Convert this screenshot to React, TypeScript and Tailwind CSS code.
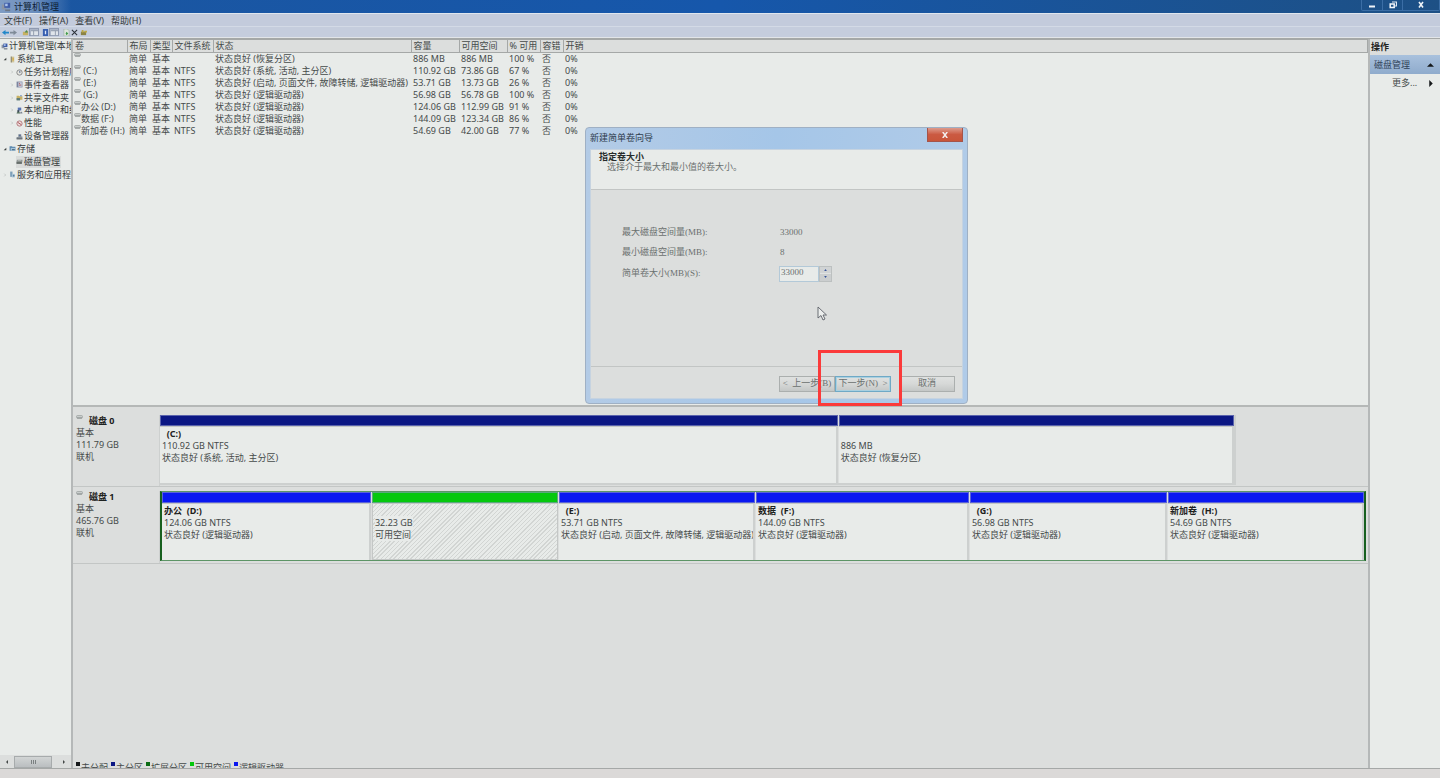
import type { ReactNode } from "react";

type IconName =
  | "computer"
  | "tools"
  | "clock"
  | "event"
  | "folder"
  | "users"
  | "perf"
  | "device"
  | "storage"
  | "disk"
  | "service";

const iconShapes: Record<IconName, ReactNode> = {
  computer: (
    <>
      <rect x="1" y="3" width="5" height="6" fill="#8b95a5" />
      <rect x="4" y="1" width="7" height="6" fill="#3f5da8" />
      <rect x="5" y="2" width="3" height="3" fill="#a9c2ec" />
      <rect x="5" y="9" width="6" height="2" fill="#6d7787" />
    </>
  ),
  tools: (
    <>
      <rect x="3" y="1" width="6" height="10" fill="#cfc59c" />
      <rect x="3" y="1" width="2" height="10" fill="#8e8a78" />
      <rect x="6" y="3" width="2" height="5" fill="#d8a93c" />
    </>
  ),
  clock: (
    <>
      <circle cx="6" cy="6" r="4.6" fill="#e6e6e0" stroke="#7d7f80" strokeWidth="1.5" />
      <path d="M6 3v3.2l2.4-1.4" fill="none" stroke="#58688c" strokeWidth="1.2" />
    </>
  ),
  event: (
    <>
      <rect x="1" y="1" width="10" height="10" fill="#7c85a0" />
      <rect x="4" y="2" width="6" height="8" fill="#c9cede" />
      <path d="M5 4h2M5 7h4" stroke="#a04b50" strokeWidth="1.5" />
    </>
  ),
  folder: (
    <>
      <path d="M1 3h4l1 1h5v6H1z" fill="#c9b264" />
      <rect x="1" y="7" width="6" height="4" fill="#5c7b7a" />
      <rect x="7" y="2" width="3" height="2" fill="#7c9ac8" />
    </>
  ),
  users: (
    <>
      <rect x="3" y="1" width="6" height="5" fill="#5873b3" />
      <circle cx="4" cy="7" r="2" fill="#3c4b58" />
      <path d="M1 11c0-3 6-3 6 0z" fill="#55705f" />
      <path d="M7 11c0-4 4-4 4 0z" fill="#7d8693" />
    </>
  ),
  perf: (
    <>
      <circle cx="6" cy="6" r="4.5" fill="#ecdcdc" stroke="#b3767a" strokeWidth="1.6" />
      <path d="M3 4l6 4" stroke="#a8474d" strokeWidth="1.5" />
    </>
  ),
  device: (
    <>
      <path d="M4 2h5v4h2v4H1V7h3z" fill="#87909a" />
      <rect x="5" y="3" width="3" height="2" fill="#526b96" />
      <rect x="1" y="9" width="10" height="2" fill="#5d656b" />
    </>
  ),
  storage: (
    <>
      <path d="M1 2h4l1 1h5v7H1z" fill="#5a88ad" />
      <rect x="3" y="5" width="8" height="5" fill="#a9c5da" />
      <rect x="5" y="7" width="5" height="2" fill="#4b6c82" />
    </>
  ),
  disk: (
    <>
      <path d="M2 3h9v2l-1 5H1V5z" fill="#8c9391" />
      <rect x="1" y="7" width="9" height="3" fill="#646b69" />
      <rect x="3" y="4" width="6" height="1" fill="#c3c8c6" />
    </>
  ),
  service: (
    <>
      <rect x="2" y="1" width="4" height="9" fill="#7c9fb9" />
      <rect x="5" y="5" width="5" height="6" fill="#a9c5d8" />
      <circle cx="8" cy="8" r="1.5" fill="#5b7f99" />
    </>
  ),
};

function Icon({ name, className = "size-[7px]" }: { name: IconName; className?: string }) {
  return (
    <svg viewBox="0 0 12 12" className={`${className} shrink-0`} aria-hidden="true">
      {iconShapes[name]}
    </svg>
  );
}

function DriveIcon() {
  return (
    <svg viewBox="0 0 7 4" className="w-[7px] h-1 shrink-0" aria-hidden="true">
      <rect x="0.5" y="0.5" width="6" height="2.6" rx="1" fill="#c9cdcc" stroke="#9a9f9e" strokeWidth="0.7" />
      <path d="M1 3h5" stroke="#7b8180" strokeWidth="0.8" />
    </svg>
  );
}

const tree: { label: string; icon: IconName; level: number; mark?: string; selected?: boolean }[] = [
  { label: "计算机管理(本地)", icon: "computer", level: 0 },
  { label: "系统工具", icon: "tools", level: 1, mark: "open" },
  { label: "任务计划程序", icon: "clock", level: 2, mark: "closed" },
  { label: "事件查看器", icon: "event", level: 2, mark: "closed" },
  { label: "共享文件夹", icon: "folder", level: 2, mark: "closed" },
  { label: "本地用户和组", icon: "users", level: 2, mark: "closed" },
  { label: "性能", icon: "perf", level: 2, mark: "closed" },
  { label: "设备管理器", icon: "device", level: 2 },
  { label: "存储", icon: "storage", level: 1, mark: "open" },
  { label: "磁盘管理", icon: "disk", level: 2, selected: true },
  { label: "服务和应用程序", icon: "service", level: 1, mark: "closed" },
];

const indents = ["pl-px", "pl-[3px]", "pl-[10px]"];

const columns = [
  { label: "卷", width: "w-[54px]" },
  { label: "布局", width: "w-[23px]" },
  { label: "类型", width: "w-[22px]" },
  { label: "文件系统", width: "w-[41px]" },
  { label: "状态", width: "w-[198px]" },
  { label: "容量", width: "w-[48px]" },
  { label: "可用空间", width: "w-[48px]" },
  { label: "% 可用", width: "w-[33px]" },
  { label: "容错", width: "w-[23px]" },
  { label: "开销", width: "w-auto" },
];

const volumes = [
  ["", "简单", "基本", "", "状态良好 (恢复分区)", "886 MB", "886 MB", "100 %", "否", "0%"],
  ["\u00a0(C:)", "简单", "基本", "NTFS", "状态良好 (系统, 活动, 主分区)", "110.92 GB", "73.86 GB", "67 %", "否", "0%"],
  ["\u00a0(E:)", "简单", "基本", "NTFS", "状态良好 (启动, 页面文件, 故障转储, 逻辑驱动器)", "53.71 GB", "13.73 GB", "26 %", "否", "0%"],
  ["\u00a0(G:)", "简单", "基本", "NTFS", "状态良好 (逻辑驱动器)", "56.98 GB", "56.78 GB", "100 %", "否", "0%"],
  ["办公 (D:)", "简单", "基本", "NTFS", "状态良好 (逻辑驱动器)", "124.06 GB", "112.99 GB", "91 %", "否", "0%"],
  ["数据 (F:)", "简单", "基本", "NTFS", "状态良好 (逻辑驱动器)", "144.09 GB", "123.34 GB", "86 %", "否", "0%"],
  ["新加卷 (H:)", "简单", "基本", "NTFS", "状态良好 (逻辑驱动器)", "54.69 GB", "42.00 GB", "77 %", "否", "0%"],
];

type Partition = { name: string; size: string; status: string; grow: string; free?: boolean };

const disk0: Partition[] = [
  { name: "\u00a0\u00a0(C:)", size: "110.92 GB NTFS", status: "状态良好 (系统, 活动, 主分区)", grow: "flex-[679]" },
  { name: "", size: "886 MB", status: "状态良好 (恢复分区)", grow: "flex-[396]" },
];

const disk1: Partition[] = [
  { name: "办公\u00a0\u00a0(D:)", size: "124.06 GB NTFS", status: "状态良好 (逻辑驱动器)", grow: "flex-[210]" },
  { name: "", size: "32.23 GB", status: "可用空间", grow: "flex-[187]", free: true },
  { name: "\u00a0\u00a0(E:)", size: "53.71 GB NTFS", status: "状态良好 (启动, 页面文件, 故障转储, 逻辑驱动器)", grow: "flex-[197]" },
  { name: "数据\u00a0\u00a0(F:)", size: "144.09 GB NTFS", status: "状态良好 (逻辑驱动器)", grow: "flex-[214]" },
  { name: "\u00a0\u00a0(G:)", size: "56.98 GB NTFS", status: "状态良好 (逻辑驱动器)", grow: "flex-[198]" },
  { name: "新加卷\u00a0\u00a0(H:)", size: "54.69 GB NTFS", status: "状态良好 (逻辑驱动器)", grow: "flex-[197]" },
];

const legend = [
  { label: "未分配", color: "bg-[#15181a]" },
  { label: "主分区", color: "bg-[#0b1784]" },
  { label: "扩展分区", color: "bg-[#0a6b14]" },
  { label: "可用空间", color: "bg-[#05c80d]" },
  { label: "逻辑驱动器", color: "bg-[#0a18f0]" },
];

function TitleBar() {
  return (
    <header className="h-[13px] shrink-0 flex items-start justify-between overflow-hidden bg-linear-to-r from-[#1b56a0] via-[#1657ab] to-[#1d5085]">
      <div className="flex items-center gap-[3px] pl-px pr-3 h-[13px] bg-linear-to-r from-[#7f9cc4] via-[#6a8dbd] to-transparent">
        <Icon name="computer" className="size-[10px]" />
        <h1 className="leading-[13px] text-[#0d1c33]">计算机管理</h1>
      </div>
      <div className="flex h-[11px] border border-t-0 border-[#3b6ea6] rounded-b-xs">
        <button aria-label="最小化" className="w-[21px] flex items-center justify-center border-r border-[#3b6ea6]">
          <svg viewBox="0 0 8 8" className="size-2"><path d="M1 5.5h6" stroke="#eef3f8" strokeWidth="2" /></svg>
        </button>
        <button aria-label="还原" className="w-5 flex items-center justify-center border-r border-[#3b6ea6]">
          <svg viewBox="0 0 8 8" className="size-2">
            <path d="M3 1h4.5v4H6" fill="none" stroke="#dfe8f2" strokeWidth="1.2" />
            <path d="M1.2 3h4v3.4h-4z" fill="none" stroke="#f3f6fa" strokeWidth="1.5" />
          </svg>
        </button>
        <button aria-label="关闭" className="w-9 flex items-center justify-center">
          <svg viewBox="0 0 8 8" className="size-2"><path d="M2 1l4 5.5M6 1L2 6.5" stroke="#eef3f8" strokeWidth="1.6" /></svg>
        </button>
      </div>
    </header>
  );
}

function ToolButton({ label, pressed, children }: { label: string; pressed?: boolean; children: ReactNode }) {
  return (
    <button
      aria-label={label}
      className={
        pressed
          ? "w-[10px] h-2 flex items-center justify-center bg-[#aab4c6] border border-[#8f9ab0]"
          : "w-2 h-2 flex items-center justify-center"
      }
    >
      <svg viewBox="0 0 8 8" className="size-[7px]">{children}</svg>
    </button>
  );
}

function Toolbar() {
  return (
    <div className="h-[10px] flex items-center pl-px bg-[#c5cddd]">
      <ToolButton label="后退"><path d="M0 4l4-3v2h4v2H4v2z" fill="#2187c9" /></ToolButton>
      <ToolButton label="前进"><path d="M8 4L4 1v2H0v2h4v2z" fill="#7f8b98" /></ToolButton>
      <div className="w-1" />
      <ToolButton label="上一级"><path d="M1 3h3l1-1h2v5H1z" fill="#c7b163" /><path d="M3 4l2-3 2 3z" fill="#4b8a55" /></ToolButton>
      <ToolButton label="显示树" pressed><path d="M0 2h8v5H0z" fill="#dfe4ea" /><path d="M0 2h8M3 2v5" stroke="#8d97a8" /></ToolButton>
      <div className="w-[2px]" />
      <ToolButton label="帮助"><path d="M1 0h6v8H1z" fill="#375fb0" /><path d="M4 2v4" stroke="#dce6f8" strokeWidth="1.5" /></ToolButton>
      <ToolButton label="显示操作窗格" pressed><path d="M0 2h8v5H0z" fill="#dfe4ea" /><path d="M0 2h8M5 2v5" stroke="#8d97a8" /></ToolButton>
      <div className="w-[3px]" />
      <ToolButton label="刷新"><path d="M1 0h4l2 2v6H1z" fill="#dde6dd" stroke="#93a39a" strokeWidth=".6" /><path d="M3 5l1-2 2 2-2 2z" fill="#3f9a4a" /></ToolButton>
      <ToolButton label="删除"><path d="M1 1l6 6M7 1L1 7" stroke="#2b3038" strokeWidth="1.2" /></ToolButton>
      <div className="w-px" />
      <ToolButton label="属性"><path d="M1 3h6v4H1z" fill="#8b8345" /><path d="M2 1h2v3H2zM5 2h3v2H5z" fill="#bda943" /></ToolButton>
    </div>
  );
}

function Sidebar() {
  return (
    <nav aria-label="控制台树" className="w-[71px] shrink-0 flex flex-col justify-between bg-[#e8ebe9] overflow-hidden">
      <ul className="h-[142px] pt-px flex flex-col">
        {tree.map((item) => (
          <li key={item.label} className={`flex-1 min-h-0 flex items-center ${indents[item.level]}`}>
            {item.level > 0 && (
              <svg viewBox="0 0 6 6" className="size-1 mr-[2px] shrink-0" aria-hidden="true">
                {item.mark === "open" && <path d="M5 1v4H1z" fill="#3a3f3e" />}
                {item.mark === "closed" && <path d="M2 1l2 2-2 2" fill="none" stroke="#b4b8b7" />}
              </svg>
            )}
            <a
              href="#"
              className={`flex items-center gap-px leading-3 whitespace-nowrap ${item.selected ? "bg-[#d9dbda] pr-px" : ""}`}
            >
              <Icon name={item.icon} />
              {item.label}
            </a>
          </li>
        ))}
      </ul>
      <div className="h-[13px] flex items-center bg-[#dcdedd]">
        <button aria-label="向左滚动" className="w-[14px] flex justify-center">
          <svg viewBox="0 0 4 4" className="size-1"><path d="M3 0v4L1 2z" fill="#444948" /></svg>
        </button>
        <div className="w-[38px] h-3 flex items-center justify-center gap-px bg-linear-to-b from-[#d2d5d5] to-[#babec0] border border-[#a7abac]">
          <i className="w-px h-1 bg-[#7b8081]" />
          <i className="w-px h-1 bg-[#7b8081]" />
          <i className="w-px h-1 bg-[#7b8081]" />
        </div>
        <button aria-label="向右滚动" className="flex-1 flex justify-center pl-1">
          <svg viewBox="0 0 4 4" className="size-1"><path d="M1 0v4l2-2z" fill="#444948" /></svg>
        </button>
      </div>
    </nav>
  );
}

function VolumeTable() {
  return (
    <table className="w-full table-fixed text-left text-[#454a49]">
      <thead>
        <tr className="h-[13px] bg-[#dcdedd]">
          {columns.map((col) => (
            <th
              key={col.label}
              className={`${col.width} p-0 pl-[2px] border border-l-0 border-[#a5a8a7] font-normal leading-3 whitespace-nowrap`}
            >
              {col.label}
            </th>
          ))}
        </tr>
      </thead>
      <tbody>
        {volumes.map((row) => (
          <tr key={row[0]} className="h-3">
            {row.map((cell, i) => (
              <td key={i} className="p-0 leading-3 whitespace-nowrap">
                {i === 0 ? (
                  <div className="h-3 flex items-start pl-px">
                    <DriveIcon />
                    <span>{cell}</span>
                  </div>
                ) : (
                  <span className="pl-[2px]">{cell}</span>
                )}
              </td>
            ))}
          </tr>
        ))}
      </tbody>
    </table>
  );
}

function PartitionBox({ part, bar }: { part: Partition; bar: string }) {
  return (
    <div className={`${part.grow} min-w-0 flex flex-col`}>
      <div className={`h-[11px] border border-[#8f96c8]/60 ${part.free ? "bg-[#05c80d]" : bar}`} />
      <div
        className={`flex-1 pl-[2px] pt-px leading-3 overflow-hidden whitespace-nowrap border-t border-[#c4c7c6] ${
          part.free
            ? "bg-[repeating-linear-gradient(135deg,#e8ebe9_0px,#e8ebe9_2px,#d2d5d3_2px,#d2d5d3_3px)] border border-[#a3aba5]"
            : "bg-[#e8ebe9] border-r-2 border-r-[#cdd0cf]"
        }`}
      >
        <p className="h-3 font-bold text-[#1d2120]">{part.name}</p>
        <p><span className={part.free ? "bg-[#e8ebe9]" : ""}>{part.size}</span></p>
        <p><span className={part.free ? "bg-[#e8ebe9]" : ""}>{part.status}</span></p>
      </div>
    </div>
  );
}

function DiskLabel({ name, size }: { name: string; size: string }) {
  return (
    <div className="w-[87px] shrink-0 pl-[3px] leading-3 border-r border-[#cdd0cf]">
      <div className="flex items-start">
        <DriveIcon />
        <strong className="pl-[6px] text-[#1d2120]">{name}</strong>
      </div>
      <p>基本</p>
      <p>{size}</p>
      <p>联机</p>
    </div>
  );
}

function DiskMap() {
  return (
    <section aria-label="磁盘" className="flex-1 min-h-0 flex flex-col bg-[#dcdedd] text-[#454a49]">
      <div className="h-20 shrink-0 flex pt-2 border-b border-[#c3c6c5]">
        <DiskLabel name="磁盘 0" size="111.79 GB" />
        <div className="flex-1 flex h-[70px]">
          <div className="flex-[1075] flex gap-px border-b-2 border-r-2 border-[#cdd0cf]">
            {disk0.map((part) => <PartitionBox key={part.size} part={part} bar="bg-[#0b1784]" />)}
          </div>
          <div className="flex-[132]" />
        </div>
      </div>
      <div className="h-[77px] shrink-0 flex pt-1 border-b border-[#c3c6c5]">
        <DiskLabel name="磁盘 1" size="465.76 GB" />
        <div className="flex-1 min-w-0 h-[70px] mr-[2px] flex gap-px border-x-2 border-y border-x-[#17601f] border-y-[#5d9566]">
          {disk1.map((part) => <PartitionBox key={part.size} part={part} bar="bg-[#0a18f0]" />)}
        </div>
      </div>
      <div className="flex-1" />
      <div className="h-[6px] shrink-0 flex gap-[3px] pl-[3px] overflow-hidden">
        {legend.map((item) => (
          <div key={item.label} className="flex gap-px whitespace-nowrap leading-3">
            <i className={`size-1 ${item.color}`} />
            {item.label}
          </div>
        ))}
      </div>
    </section>
  );
}

function ActionsPane() {
  return (
    <aside className="w-[70px] shrink-0 bg-[#e8ebe9] text-[#454a49]">
      <h2 className="h-4 pl-px pt-px leading-[14px] font-bold bg-[#dcdedd] text-[#1d2120]">操作</h2>
      <button className="w-full h-[19px] pl-1 pr-[6px] flex items-center justify-between bg-linear-to-b from-[#a9c1dd] to-[#8fabcc] text-[#2f4258]">
        磁盘管理
        <svg viewBox="0 0 8 4" className="w-[7px] h-1"><path d="M0 4l4-4 4 4z" fill="#15181a" /></svg>
      </button>
      <button className="w-full h-[18px] pl-[22px] pr-[7px] flex items-center justify-between">
        更多...
        <svg viewBox="0 0 4 8" className="w-1 h-[7px]"><path d="M0 0l4 4-4 4z" fill="#15181a" /></svg>
      </button>
    </aside>
  );
}

const dialogButton =
  "h-4 flex items-center justify-center border bg-linear-to-b from-[#dfe1e0] via-[#d6d8d7] to-[#c4c7c6] whitespace-nowrap";

function WizardDialog() {
  return (
    <div
      role="dialog"
      aria-labelledby="wizard-title"
      className="absolute left-[585px] top-[127px] w-[383px] h-[277px] flex flex-col px-1 pb-1 rounded-sm border border-[#9fb0c4] bg-linear-to-r from-[#b3cbe6] via-[#a5c6e8] to-[#b0cbe8] text-[#6b706f] font-['Liberation_Serif','Noto_Sans_CJK_SC',serif]"
    >
      <div className="h-[21px] shrink-0 flex justify-between items-start">
        <h2
          id="wizard-title"
          className="leading-5 text-[#2d3b4c] font-['Noto_Sans','Noto_Sans_CJK_SC',sans-serif]"
        >
          新建简单卷向导
        </h2>
        <button
          aria-label="关闭"
          className="w-9 h-[14px] flex items-center justify-center border border-t-0 border-[#a5544a] bg-linear-to-b from-[#dd9a8c] via-[#cb5a42] to-[#c8553a]"
        >
          <svg viewBox="0 0 8 8" className="size-[6px]"><path d="M1 0l6 8M7 0L1 8" stroke="#f3eeee" strokeWidth="2" /></svg>
        </button>
      </div>
      <div className="flex-1 flex flex-col border border-[#c6d3e0] bg-[#dcdedd]">
        <div className="h-10 shrink-0 pl-2 pt-[2px] bg-[#e8ebe9] border-b border-[#c2c5c4]">
          <h3 className="leading-[10px] font-bold text-[#272b2a]">指定卷大小</h3>
          <p className="pl-2 leading-[10px]">选择介于最大和最小值的卷大小。</p>
        </div>
        <dl className="flex-1 pt-8 pl-[31px]">
          <div className="h-[21px] flex items-center">
            <dt className="w-[158px]">最大磁盘空间量(MB):</dt>
            <dd>33000</dd>
          </div>
          <div className="h-5 flex items-center">
            <dt className="w-[158px]">最小磁盘空间量(MB):</dt>
            <dd>8</dd>
          </div>
          <div className="h-[21px] flex items-center">
            <dt className="w-[157px]"><label htmlFor="volume-size">简单卷大小(MB)(S):</label></dt>
            <dd className="flex h-4">
              <input
                id="volume-size"
                defaultValue="33000"
                className="w-10 h-4 px-px pb-1 bg-[#e8ebe9] border border-[#b3c9d8] outline-none"
              />
              <span className="w-[13px] flex flex-col border border-[#bcc0c0] bg-[#c7cacb]">
                <button aria-label="增加" className="flex-1 flex items-center justify-center border-b border-[#e0e3e3] bg-[#d0d3d4]">
                  <svg viewBox="0 0 4 3" className="w-[3px] h-[2px]"><path d="M0 3l2-3 2 3z" fill="#36539a" /></svg>
                </button>
                <button aria-label="减少" className="flex-1 flex items-center justify-center bg-[#cbcecf]">
                  <svg viewBox="0 0 4 3" className="w-[3px] h-[2px]"><path d="M0 0l2 3 2-3z" fill="#36539a" /></svg>
                </button>
              </span>
            </dd>
          </div>
        </dl>
        <div className="h-8 shrink-0 pt-[9px] pr-[7px] flex justify-end border-t border-[#c2c5c4]">
          <button className={`${dialogButton} w-14 border-[#abafae]`}>&lt;&nbsp; 上一步(B)</button>
          <button className={`${dialogButton} w-14 border-[#6fa9c6] inset-ring inset-ring-[#a9d0e0]`}>下一步(N)&nbsp; &gt;</button>
          <button className={`${dialogButton} w-14 ml-2 border-[#abafae]`}>取消</button>
        </div>
      </div>
    </div>
  );
}

export default function App() {
  return (
    <div className="relative h-screen flex flex-col overflow-hidden bg-[#d9d9d8] text-[9px] text-[#353a3b] font-['Noto_Sans','Noto_Sans_CJK_SC',sans-serif]">
      <TitleBar />
      <div className="shrink-0 border-t border-b border-t-[#dfe6ee] border-b-[#e2e5e8]">
        <nav aria-label="菜单" className="h-[13px] flex items-center gap-[7px] pl-1 leading-[13px] bg-[#c3cbdc] border-b border-[#d3dae6]">
          <button>文件(F)</button>
          <button>操作(A)</button>
          <button>查看(V)</button>
          <button>帮助(H)</button>
        </nav>
        <Toolbar />
      </div>
      <div className="flex-1 min-h-0 flex border-y border-[#a5a8a7]">
        <Sidebar />
        <main className="flex-1 min-w-0 flex flex-col border-x-2 border-[#b5b8b8]">
          <div className="h-[368px] shrink-0 bg-[#e8ebe9] border-b-2 border-[#b5b8b7]">
            <VolumeTable />
          </div>
          <DiskMap />
        </main>
        <ActionsPane />
      </div>
      <footer className="h-[9px] shrink-0 bg-[#dbd9d8]" />

      <WizardDialog />
      <svg viewBox="0 0 10 15" className="absolute left-[817px] top-[306px] w-[10px] h-[15px]" aria-hidden="true">
        <path d="M1 1v11l3-2.5 2 4.5 2-1-2-4h3.5z" fill="#eceeed" stroke="#5c6068" strokeWidth="0.9" />
      </svg>
      <div className="absolute left-[818px] top-[350px] w-[84px] h-14 border-3 border-[#fb3a3a]" />
    </div>
  );
}
